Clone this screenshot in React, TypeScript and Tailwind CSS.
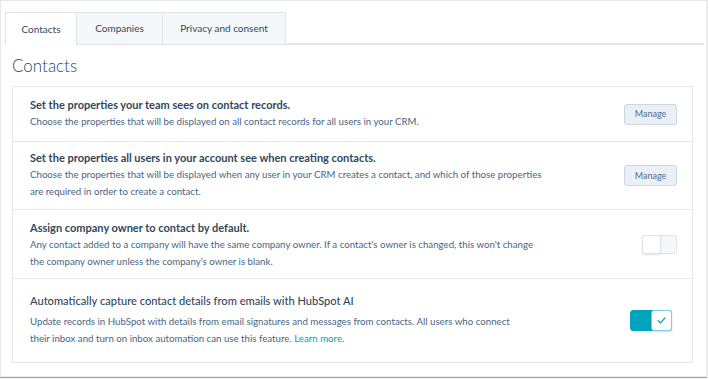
import React from "react";

const font = { fontFamily: "Lato, 'Noto Sans', sans-serif" };

function ManageButton() {
  return (
    <button className="w-[53px] h-[21px] rounded-[3px] border border-[#cbd6e2] bg-[#eaf0f6] text-[9px] text-[#506e91] flex items-center justify-center">
      Manage
    </button>
  );
}

function ToggleOff() {
  return (
    <div className="relative w-[35px] h-[19px] rounded-[3px] border border-[#dfe3eb] bg-[#f5f8fa]">
      <div className="absolute left-[-1px] top-[-1px] w-[19px] h-[19px] rounded-[3px] border border-[#dfe3eb] bg-white shadow-[0_1px_2px_rgba(0,0,0,0.12)]" />
    </div>
  );
}

function ToggleOn() {
  return (
    <div className="relative w-[42px] h-[21px] rounded-[3px] bg-[#00a4bd] border border-[#00a4bd]">
      <div className="absolute right-[-1px] top-[-1px] w-[21px] h-[21px] rounded-[3px] border border-[#7fd1de] bg-white shadow-[0_1px_2px_rgba(0,0,0,0.15)] flex items-center justify-center">
        <svg width="9" height="7" viewBox="0 0 9 7" fill="none">
          <path d="M1 3.6 L3.4 5.8 L8 1" stroke="#00a4bd" strokeWidth="1.2" strokeLinecap="round" strokeLinejoin="round" />
        </svg>
      </div>
    </div>
  );
}

export default function App() {
  return (
    <div className="w-[709px] h-[379px] bg-white overflow-hidden text-[#33475b]" style={font}>
      <div className="w-[707px] h-[377px] border border-[#e8e8e8] shadow-[0_1px_1px_rgba(0,0,0,0.35)] flex flex-col">
        {/* Tabs */}
        <div className="flex ml-[4px] mr-[2px] mt-[11px] h-[33px]">
          <div className="w-[72px] h-[33px] border-t border-l border-r border-[#dfe3eb] bg-white flex items-center justify-center text-[10px] text-[#33475b]">
            Contacts
          </div>
          <div className="w-[86px] h-[33px] border-t border-r border-b border-[#dfe3eb] bg-[#f5f8fa] flex items-center justify-center text-[10px] text-[#33475b]">
            Companies
          </div>
          <div className="w-[123px] h-[33px] border-t border-r border-b border-[#dfe3eb] bg-[#f5f8fa] flex items-center justify-center text-[10px] text-[#33475b]">
            Privacy and consent
          </div>
          <div className="flex-1 border-b-2 border-[#e3e8ee]" />
        </div>

        {/* Heading */}
        <div className="ml-[11px] mt-[9px] text-[17px] leading-[24px] font-light text-[#33475b]">Contacts</div>

        {/* Card */}
        <div className="ml-[11px] mt-[8px] w-[681px] border border-[#e3e8ee] flex flex-col">
          <div className="h-[55px] pl-[17px] pr-[15px] flex items-center justify-between border-b border-[#e3e8ee]">
            <div className="mt-[-3px]">
              <div className="text-[11px] leading-[17px] font-bold">Set the properties your team sees on contact records.</div>
              <div className="text-[9.7px] leading-[17px] text-[#4a6582]">
                Choose the properties that will be displayed on all contact records for all users in your CRM.
              </div>
            </div>
            <ManageButton />
          </div>

          <div className="h-[68px] pl-[17px] pr-[15px] flex items-center justify-between border-b border-[#e3e8ee]">
            <div className="mt-[-2px]">
              <div className="text-[11px] leading-[17px] font-bold">Set the properties all users in your account see when creating contacts.</div>
              <div className="text-[9.7px] leading-[17px] text-[#4a6582] whitespace-nowrap">
                <div>Choose the properties that will be displayed when any user in your CRM creates a contact, and which of those properties</div>
                <div>are required in order to create a contact.</div>
              </div>
            </div>
            <ManageButton />
          </div>

          <div className="h-[69px] pl-[17px] pr-[15px] flex items-center justify-between border-b border-[#e3e8ee]">
            <div>
              <div className="text-[11px] leading-[17px] font-bold">Assign company owner to contact by default.</div>
              <div className="text-[9.7px] leading-[16.5px] text-[#4a6582] whitespace-nowrap">
                <div>Any contact added to a company will have the same company owner. If a contact's owner is changed, this won't change</div>
                <div>the company owner unless the company's owner is blank.</div>
              </div>
            </div>
            <ToggleOff />
          </div>

          <div className="h-[83px] pl-[17px] pr-[20px] flex items-center justify-between">
            <div className="mt-[-3px]">
              <div className="text-[11.1px] leading-[17px] font-medium">Automatically capture contact details from emails with HubSpot AI</div>
              <div className="mt-[4px] text-[9.7px] leading-[16.5px] text-[#4a6582] whitespace-nowrap">
                <div>Update records in HubSpot with details from email signatures and messages from contacts. All users who connect</div>
                <div>
                  their inbox and turn on inbox automation can use this feature.{" "}
                  <span className="text-[#00a4bd]">Learn more.</span>
                </div>
              </div>
            </div>
            <ToggleOn />
          </div>
        </div>
      </div>
    </div>
  );
}
